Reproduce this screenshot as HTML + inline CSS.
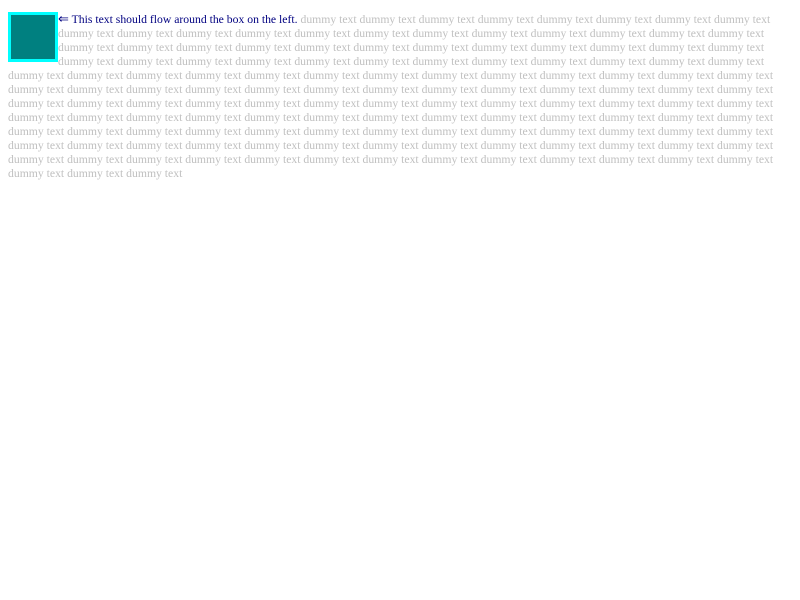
<!DOCTYPE html>
<html><head><meta charset="utf-8"><style>
html,body{margin:0;background:#fff}
body{padding:12px 8px 0 8px;font-family:"Liberation Serif",serif;font-size:11.7px;line-height:14px;color:#c0c0c0}
.box{float:left;width:44px;height:44px;background:#008080;border:3px solid #00ffff;margin:0}
.b{color:#000080}
.a{font-size:13px;line-height:10px}
.t{position:relative;top:1px}
</style></head><body>
<div class="box"></div><span class="t"><span class="b"><span class="a">&#8656;</span> This text should flow around the box on the left.</span>
dummy text dummy text dummy text dummy text dummy text dummy text dummy text dummy text dummy text dummy text dummy text dummy text dummy text dummy text dummy text dummy text dummy text dummy text dummy text dummy text dummy text dummy text dummy text dummy text dummy text dummy text dummy text dummy text dummy text dummy text dummy text dummy text dummy text dummy text dummy text dummy text dummy text dummy text dummy text dummy text dummy text dummy text dummy text dummy text dummy text dummy text dummy text dummy text dummy text dummy text dummy text dummy text dummy text dummy text dummy text dummy text dummy text dummy text dummy text dummy text dummy text dummy text dummy text dummy text dummy text dummy text dummy text dummy text dummy text dummy text dummy text dummy text dummy text dummy text dummy text dummy text dummy text dummy text dummy text dummy text dummy text dummy text dummy text dummy text dummy text dummy text dummy text dummy text dummy text dummy text dummy text dummy text dummy text dummy text dummy text dummy text dummy text dummy text dummy text dummy text dummy text dummy text dummy text dummy text dummy text dummy text dummy text dummy text dummy text dummy text dummy text dummy text dummy text dummy text dummy text dummy text dummy text dummy text dummy text dummy text dummy text dummy text dummy text dummy text dummy text dummy text dummy text dummy text dummy text dummy text dummy text dummy text dummy text dummy text dummy text dummy text dummy text dummy text</span>
</body></html>
